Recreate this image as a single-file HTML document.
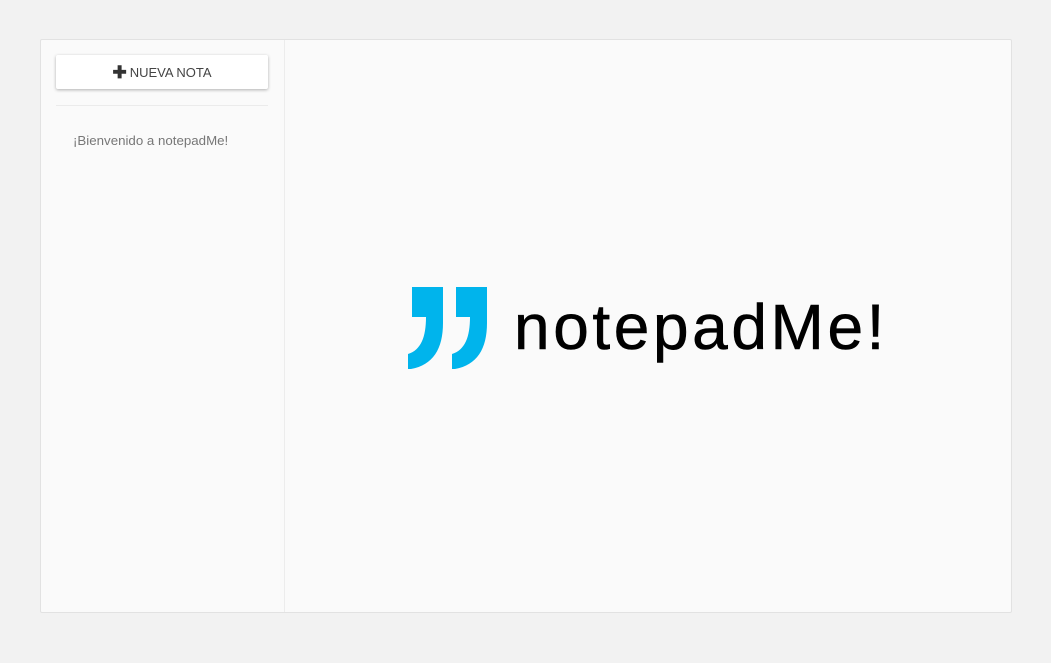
<!DOCTYPE html>
<html><head><meta charset="utf-8"><style>
html,body{margin:0;padding:0;width:1051px;height:663px;background:#f2f2f2;font-family:"Liberation Sans",sans-serif;overflow:hidden}
.card{position:absolute;left:40px;top:39px;width:972px;height:574px;box-sizing:border-box;background:#fafafa;border:1px solid #e2e2e2;border-radius:2px}
.side{position:absolute;left:0;top:0;width:243px;height:572px;border-right:1px solid #ececec}
.btn{position:absolute;left:15px;top:15px;width:212px;height:34px;background:#fff;border-radius:2px;box-shadow:0 1px 3px rgba(0,0,0,.3);font-size:13px;color:#444;text-align:center;line-height:35px}
.btn b{font-size:17px;color:#333;vertical-align:-1px;margin-right:3px}
.hr{position:absolute;left:15px;top:65px;width:212px;height:1px;background:#ebebeb}
.wel{position:absolute;left:32px;top:93px;font-size:13.3px;color:#777}
.logo{position:absolute;left:0;top:0}
.t{position:absolute;left:473px;top:251px;font-size:64px;letter-spacing:3.6px;color:#000;line-height:72px;-webkit-text-stroke:0.6px #000}
</style></head><body>
<div class="card">
<div class="side">
<div class="btn"><b>✚</b>NUEVA NOTA</div>
<div class="hr"></div>
<div class="wel">¡Bienvenido a notepadMe!</div>
</div>
<svg class="logo" width="971" height="573" viewBox="40 39 971 573">
<path fill="#00b4ec" d="M411 286 H442 V322 C442 348 432 364 410 368 H407 V353 C420 349 425 336 425 316 H411 Z"/>
<path fill="#00b4ec" d="M455 286 H486 V322 C486 348 476 364 454 368 H451 V353 C464 349 469 336 469 316 H455 Z"/>
</svg>
<div class="t">notepadMe!</div>
</div>
</body></html>
